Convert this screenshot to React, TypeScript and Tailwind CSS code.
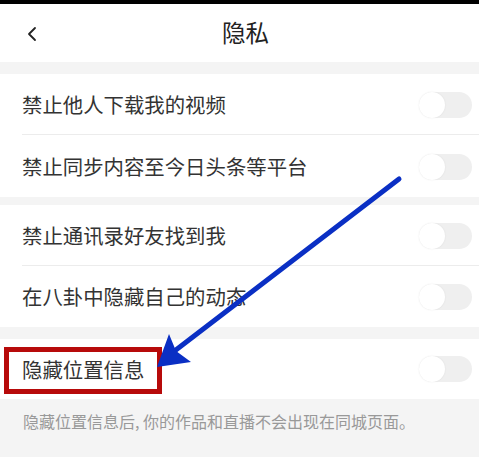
import { ChevronLeft } from "lucide-react";

const font = { fontFamily: '"Noto Sans CJK SC", "Noto Sans", sans-serif' };

function Toggle() {
    return (
        <div className="relative h-[26px] w-[53px] rounded-full bg-[#efefef]">
            <div className="absolute left-0 top-0 h-[26px] w-[26px] rounded-full bg-white shadow-[0_0_2px_rgba(0,0,0,0.08)]" />
        </div>
    );
}

function Row({ label, divider }: { label: string; divider?: boolean }) {
    return (
        <div className="relative flex h-[61px] items-center justify-between bg-white pl-[22px] pr-[7px]">
            <span className="text-[20.4px] leading-none text-[#333]">{label}</span>
            <Toggle />
            {divider && <div className="absolute bottom-0 left-[22px] right-0 h-px bg-[#ececec]" />}
        </div>
    );
}

export default function App() {
    return (
        <div className="relative flex h-[457px] w-[479px] flex-col overflow-hidden bg-[#f4f4f4]" style={font}>
            <div className="h-[4px] bg-black" />
            <div className="relative flex h-[58px] items-center justify-center bg-white">
                <ChevronLeft className="absolute left-[20px] top-[18px] h-[24px] w-[24px] text-[#222]" strokeWidth={1.8} />
                <span className="ml-[12px] text-[23.5px] text-[#222]">隐私</span>
            </div>
            <div className="h-[12px]" />
            <Row label="禁止他人下载我的视频" divider />
            <div className="h-px bg-white" />
            <Row label="禁止同步内容至今日头条等平台" />
            <div className="h-[8px]" />
            <Row label="禁止通讯录好友找到我" divider />
            <Row label="在八卦中隐藏自己的动态" />
            <div className="h-[12px]" />
            <div className="flex h-[60px] items-center justify-between bg-white pl-[22px] pr-[7px]">
                <span className="text-[20.4px] leading-none text-[#333]">隐藏位置信息</span>
                <Toggle />
            </div>
            <div className="px-[23px] pt-[10px] text-[16px] text-[#999]">
                隐藏位置信息后, 你的作品和直播不会出现在同城页面。
            </div>

            <div className="absolute left-[4px] top-[347px] h-[47px] w-[158px] border-[5px] border-[#b70a0a]" />
            <svg className="absolute left-0 top-0" width="479" height="457">
                <line x1="399" y1="179" x2="168" y2="356" stroke="#0a2fc4" strokeWidth="5" strokeLinecap="round" />
                <polygon points="157,367 169,334 176,351 191,362" fill="#0a2fc4" />
            </svg>
        </div>
    );
}
